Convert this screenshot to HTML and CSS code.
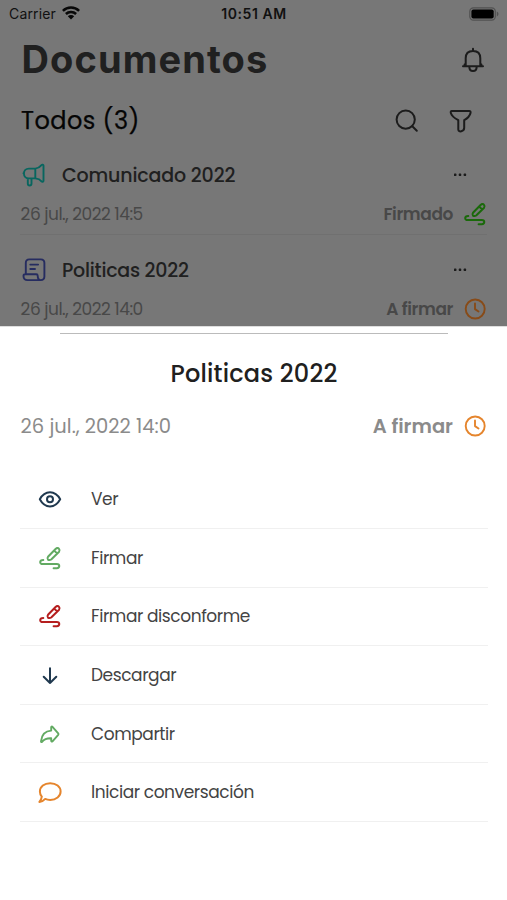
FILE: index.html
```html
<!DOCTYPE html>
<html lang="es">
<head>
<meta charset="utf-8">
<title>Documentos</title>
<link rel="stylesheet" href="styles.css">
</head>
<body>
<svg class="defs" width="0" height="0" aria-hidden="true">
  <symbol id="sign" viewBox="0 0 24 24"><g fill="none" stroke="currentColor" stroke-width="2" stroke-linecap="round" stroke-linejoin="round"><path d="M10 10.800 17.800 2.800a2 2 0 0 1 3.200.1 2.200 2.200 0 0 1 .1 2.800L13.200 13.500Q11.500 14.600 10 13.700 8.800 12.400 10 10.800ZM16.200 4.600l3 2.900M5.300 14C1.200 14.200 1.300 18 4.700 18h14.100c3.300 0 3.300 4.200 0 4.200H15.600"/></g></symbol>
  <symbol id="clock" viewBox="0 0 24 24"><g fill="none" stroke="currentColor" stroke-width="1.900" stroke-linecap="round" stroke-linejoin="round"><circle cx="12.200" cy="12" r="9.500"/><path d="M12 6.500v5.600l3.500 2.400"/></g></symbol>
</svg>
<main class="screen">
  <section class="page">
    <div class="status">
      <span class="carrier">Carrier</span>
      <svg class="wifi" viewBox="0 0 18 14"><g fill="none" stroke="#080808" stroke-width="2.500"><path d="M.9 4.800a11.500 11.500 0 0 1 16.200 0M3.900 8a7.200 7.200 0 0 1 10.200 0"/></g><path d="M5.800 10.200a4.600 4.600 0 0 1 6.400 0L9 13.400Z" fill="#080808"/></svg>
      <span class="time">10:51 AM</span>
      <svg class="battery" viewBox="0 0 30 14"><rect x=".8" y=".8" width="25.500" height="12.400" rx="3.600" fill="none" stroke="#515151" stroke-width="1.200"/><rect x="2.400" y="2.400" width="22.300" height="9.200" rx="2" fill="#000"/><path d="M27.800 4.600c2.200.8 2.200 4 0 4.800Z" fill="#515151"/></svg>
    </div>
    <header class="top">
      <h1>Documentos</h1>
      <svg class="bell" viewBox="0 0 24 26"><g fill="none" stroke="#1c1c1c" stroke-width="2" stroke-linecap="round" stroke-linejoin="round"><path d="M12 1.800v1.700M2 19.200h20M4.700 19V11.300C4.700 6.700 7.500 4 12 4s7.300 2.700 7.300 7.300V19M3.600 17.500v1.500M20.400 17.500v1.500M8.300 19.400c0 6 7.400 6 7.400 0"/></g></svg>
    </header>
    <div class="filter">
      <h2>Todos (3)</h2>
      <svg class="search" viewBox="0 0 24 24"><g fill="none" stroke="#1c1c1c" stroke-width="2" stroke-linecap="round"><circle cx="10.700" cy="10.600" r="9.100"/><path d="m17.300 17.300 4.500 4.400"/></g></svg>
      <svg class="funnel" viewBox="0 0 24 24"><path d="M2.800 2h17.400c1.200 0 1.600.8 1.300 2-.8 3.600-3.400 5.600-6.300 7.200v7.600c0 3.800-5.900 5-5.900 1.600v-9.200C6.400 9.600 3.200 8 1.900 4.200c-.4-1.200-.1-2.200.9-2.200Z" fill="none" stroke="#1c1c1c" stroke-width="2" stroke-linejoin="round"/></svg>
    </div>
    <article class="doc">
      <div class="doc-head">
        <svg class="kind teal" viewBox="0 0 24 24"><g fill="none" stroke="currentColor" stroke-width="1.900" stroke-linecap="round" stroke-linejoin="round"><path d="M13.300 5.600H6.800a4.900 4.900 0 0 0 0 9.800h6.500ZM13.300 5.600c3.400-.4 5-2 6.200-3.500.7-.8 2-.5 2 .5v15.200c0 1-1.300 1.300-2 .5-1.200-1.500-2.800-2.600-6.200-2.900M1.500 10.200H2M5.800 15.500v4.900c0 2.700 3.700 2.700 3.700 0v-4.800"/></g></svg>
        <h3 class="t-com">Comunicado 2022</h3>
        <svg class="dots" viewBox="0 0 14 4"><g fill="#1c1c1c"><rect x="1" y=".6" width="2.400" height="2.400" rx=".6"/><rect x="5.800" y=".6" width="2.400" height="2.400" rx=".6"/><rect x="10.700" y=".6" width="2.400" height="2.400" rx=".6"/></g></svg>
      </div>
      <div class="doc-meta"><span class="date">26 jul., 2022 14:5</span><span class="state">Firmado</span><svg class="mark dark-green"><use href="#sign"/></svg></div>
    </article>
    <article class="doc second">
      <div class="doc-head">
        <svg class="kind indigo" viewBox="0 0 24 24"><g fill="none" stroke="currentColor" stroke-width="1.900" stroke-linecap="round" stroke-linejoin="round"><path d="M3.800 16.200V5c0-2.500 1-3.600 3.500-3.600h11.500c2.500 0 3.600 1.100 3.600 3.600v13.600c0 2.400-1.300 3.500-3.700 3.500H5.600c-2.700 0-4.100-1.400-4.100-4.200 0-1.200.4-1.700 1.500-1.700h11.200c1 0 1.500.5 1.500 1.500 0 2.900.9 4.400 3.200 4.400M8.300 6.600h7.800M8.300 11h4.700"/></g></svg>
        <h3 class="t-pol">Politicas 2022</h3>
        <svg class="dots" viewBox="0 0 14 4"><g fill="#1c1c1c"><rect x="1" y=".6" width="2.400" height="2.400" rx=".6"/><rect x="5.800" y=".6" width="2.400" height="2.400" rx=".6"/><rect x="10.700" y=".6" width="2.400" height="2.400" rx=".6"/></g></svg>
      </div>
      <div class="doc-meta"><span class="date">26 jul., 2022 14:0</span><span class="state">A firmar</span><svg class="mark dark-orange"><use href="#clock"/></svg></div>
    </article>
  </section>
  <section class="sheet">
    <div class="handle"></div>
    <h2 class="sheet-title">Politicas 2022</h2>
    <div class="sheet-meta"><span class="sheet-date">26 jul., 2022 14:0</span><span class="sheet-state">A firmar</span><svg class="mark orange"><use href="#clock"/></svg></div>
    <ul class="menu">
      <li><svg class="navy" viewBox="0 0 24 24"><g fill="none" stroke="currentColor" stroke-width="2"><path d="M1.800 12.300C4.200 7.800 7.500 5.200 12 5.200S19.800 7.800 22.200 12.300C19.800 16.800 16.500 19.400 12 19.400S4.200 16.800 1.800 12.300Z" stroke-linejoin="round"/><circle cx="12" cy="12.300" r="3"/></g></svg><span>Ver</span></li>
      <li><svg class="green"><use href="#sign"/></svg><span>Firmar</span></li>
      <li><svg class="red"><use href="#sign"/></svg><span>Firmar disconforme</span></li>
      <li><svg class="navy" viewBox="0 0 24 24"><path d="M12 5.300v14.600M5.700 13.700l6.300 6.300 6.300-6.300" fill="none" stroke="currentColor" stroke-width="2" stroke-linecap="round" stroke-linejoin="round"/></svg><span>Descargar</span></li>
      <li><svg class="green" viewBox="0 0 24 24"><path d="M13.200 5.300c0-.8.700-1 1.300-.5l5.700 6.500c.4.500.4 1 0 1.500l-5.700 6.500c-.6.500-1.300.3-1.300-.5v-2.600c-4.400-.2-7 .9-9.200 3.600-.4.500-1.100.3-1-.5C3.700 12.500 7 8.900 13.200 8.600Z" fill="none" stroke="currentColor" stroke-width="1.900" stroke-linejoin="round"/></svg><span>Compartir</span></li>
      <li><svg class="orange" viewBox="0 0 24 24"><path d="M12.200 3.200c5.900 0 10.400 3.500 10.400 8.300s-4.500 8.400-10.400 8.400c-1.800 0-3.500-.3-5-1-1.600 1.800-3.300 2.900-5.800 3.100 1.300-1.500 2.100-3.300 2.400-5.300-1.200-1.500-1.900-3.200-1.900-5.200 0-4.800 4.400-8.300 10.300-8.300Z" fill="none" stroke="currentColor" stroke-width="2" stroke-linejoin="round"/></svg><span>Iniciar conversación</span></li>
    </ul>
  </section>
</main>
</body>
</html>
```
FILE: styles.css
```css
* { box-sizing: border-box; }
body { margin: 0; font-family: Poppins, Inter, "Liberation Sans", sans-serif; background: #fff; }
h1, h2, h3, ul { margin: 0; padding: 0; font-weight: 500; }
svg { display: block; flex: none; }
.defs { position: absolute; }
.screen { width: 507px; height: 900px; overflow: hidden; display: flex; flex-direction: column; }
.page { height: 326px; background: #777; color: #202020; overflow: hidden; flex: none; }
.status { height: 28px; padding: 0 8px 1px 9px; display: grid; grid-template-columns: 53px 1fr auto 1fr 30px; align-items: center; font-family: Inter, sans-serif; font-size: 14px; color: #111; }
.carrier { letter-spacing: .15px; }
.wifi { width: 18px; height: 14px; margin-top: -1px; }
.time { font-weight: 600; letter-spacing: .55px; margin-left: -23px; }
.battery { width: 30px; height: 14px; grid-column: 5; }
.top { height: 64px; padding: 0 22px; display: flex; align-items: center; justify-content: space-between; }
h1 { font: 700 38px/64px Inter, sans-serif; letter-spacing: 1.100px; margin: -2px 0 0 -.5px; }
.bell { width: 24px; height: 26px; }
.filter { height: 58px; padding: 0 34px 0 21px; display: flex; align-items: center; }
.filter h2 { font-size: 24px; font-weight: 400; flex: 1; letter-spacing: .45px; color: #050505; margin-top: -1px; -webkit-text-stroke: .25px; }
.search, .funnel { width: 24px; height: 24px; }
.funnel { margin-left: 30px; }
.doc { height: 95px; margin: 0 20px; background: linear-gradient(#707070, #707070) 0 84px / 100% 1px no-repeat; }
.doc.second { background: none; }
.doc-head { height: 49px; display: flex; align-items: center; }
.kind { width: 24px; height: 24px; margin: 0 16px 0 2px; }
.doc-head h3 { font-size: 19px; flex: 1; padding-top: 1px; }
.t-com { letter-spacing: -.15px; }
.t-pol { letter-spacing: -.23px; }
.dots { width: 14px; height: 4px; margin-right: 20px; }
.doc-meta { height: 30px; display: flex; align-items: center; font-size: 17px; color: #484848; }
.date { flex: 1; letter-spacing: -.48px; padding-left: .6px; }
.state { font-weight: 600; margin-right: 10px; letter-spacing: -.4px; }
.mark { width: 24px; height: 24px; }
.teal { color: #08665f; }
.indigo { color: #262c60; }
.dark-green { color: #1a690a; }
.dark-orange { color: #884b18; }
.orange { color: #e5852d; }
.green { color: #62aa62; }
.red { color: #b51e1e; }
.navy { color: #20394f; }
.sheet { flex: 1; padding: 6px 19px 0 20px; border-top: 1px solid #dedede; }
.handle { width: 388px; height: 1px; background: #bbb; margin: 0 auto; }
.sheet-title { font-size: 24px; height: 78px; line-height: 79px; text-align: center; color: #202020; letter-spacing: .2px; }
.sheet-meta { height: 28px; display: flex; align-items: center; font-size: 19.500px; color: #8b8b8b; padding-right: 1px; }
.sheet-date { flex: 1; letter-spacing: .02px; padding-left: .6px; }
.sheet-state { font-weight: 600; margin-right: 10px; }
.menu { list-style: none; margin-top: 30.400px; font-weight: 400; letter-spacing: -.42px; }
.menu li { height: 58.600px; border-bottom: 1px solid #f0f0f0; display: flex; align-items: center; font-size: 17px; color: #444; }
.menu svg { width: 24px; height: 24px; margin: 0 29px 0 18px; }
```
